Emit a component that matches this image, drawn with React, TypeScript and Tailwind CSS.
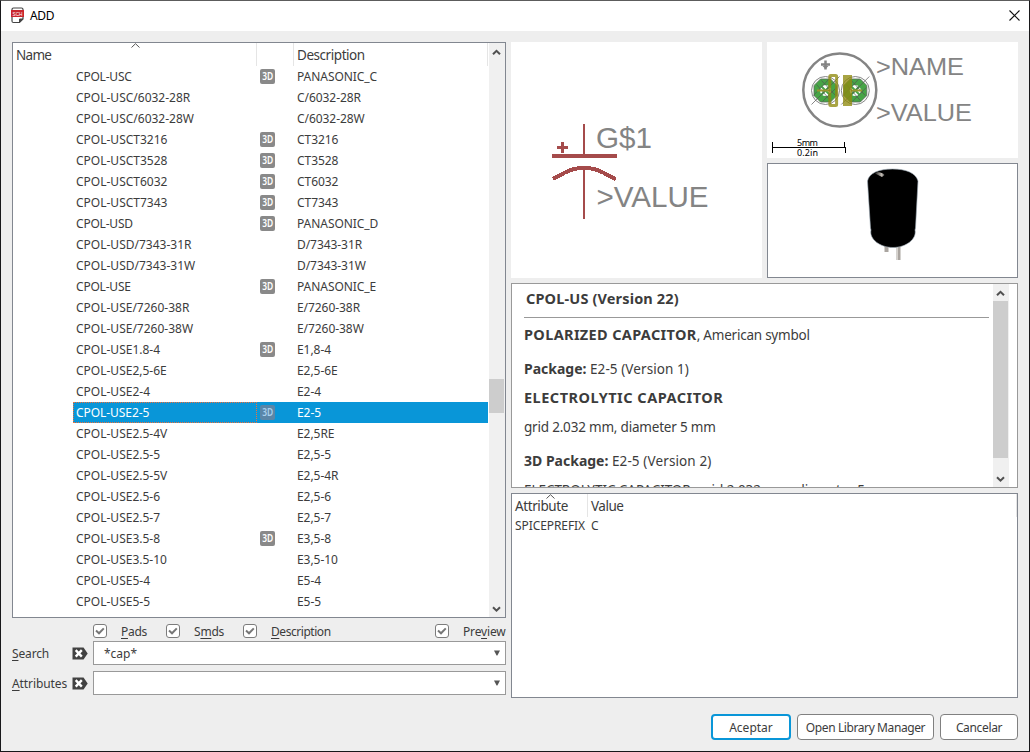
import React from "react";

const rows: [string, string, boolean][] = [
  ["CPOL-USC", "PANASONIC_C", true],
  ["CPOL-USC/6032-28R", "C/6032-28R", false],
  ["CPOL-USC/6032-28W", "C/6032-28W", false],
  ["CPOL-USCT3216", "CT3216", true],
  ["CPOL-USCT3528", "CT3528", true],
  ["CPOL-USCT6032", "CT6032", true],
  ["CPOL-USCT7343", "CT7343", true],
  ["CPOL-USD", "PANASONIC_D", true],
  ["CPOL-USD/7343-31R", "D/7343-31R", false],
  ["CPOL-USD/7343-31W", "D/7343-31W", false],
  ["CPOL-USE", "PANASONIC_E", true],
  ["CPOL-USE/7260-38R", "E/7260-38R", false],
  ["CPOL-USE/7260-38W", "E/7260-38W", false],
  ["CPOL-USE1.8-4", "E1,8-4", true],
  ["CPOL-USE2,5-6E", "E2,5-6E", false],
  ["CPOL-USE2-4", "E2-4", false],
  ["CPOL-USE2-5", "E2-5", true],
  ["CPOL-USE2.5-4V", "E2,5RE", false],
  ["CPOL-USE2.5-5", "E2,5-5", false],
  ["CPOL-USE2.5-5V", "E2,5-4R", false],
  ["CPOL-USE2.5-6", "E2,5-6", false],
  ["CPOL-USE2.5-7", "E2,5-7", false],
  ["CPOL-USE3.5-8", "E3,5-8", true],
  ["CPOL-USE3.5-10", "E3,5-10", false],
  ["CPOL-USE5-4", "E5-4", false],
  ["CPOL-USE5-5", "E5-5", false],
];
const SELECTED = "CPOL-USE2-5";

function Chevron({ down = false }: { down?: boolean }) {
  return (
    <svg width="9" height="7" viewBox="0 0 9 7" className="block">
      <path d={down ? "M1 1.2L4.5 4.7L8 1.2" : "M1 5.3L4.5 1.8L8 5.3"} fill="none" stroke="#505050" strokeWidth="2" />
    </svg>
  );
}

function SortMark() {
  return (
    <svg width="9" height="5" viewBox="0 0 9 5" className="block">
      <path d="M0.5 4.5L4.5 0.7L8.5 4.5" fill="none" stroke="#555" strokeWidth="1" />
    </svg>
  );
}

function Badge({ selected }: { selected: boolean }) {
  return (
    <svg width="15" height="15" viewBox="0 0 15 15" className="block">
      <rect width="15" height="15" rx="2" fill={selected ? "#5a86a8" : "#898989"} />
      <text
        x="2.2"
        y="11.4"
        fontSize="10.5"
        fontWeight="600"
        textLength="11"
        lengthAdjust="spacingAndGlyphs"
        fill={selected ? "#a8d0ee" : "#ffffff"}
      >
        3D
      </text>
    </svg>
  );
}

function Check({ before, letter, after }: { before: string; letter: string; after: string }) {
  return (
    <label className="flex items-center">
      <span className="flex h-[14px] w-[14px] items-center justify-center rounded-[3px] border border-[#7c7c7c] bg-white">
        <svg width="10" height="8" viewBox="0 0 10 8">
          <path d="M1 3.6L4 6.3L8.8 1.4" fill="none" stroke="#777" strokeWidth="2" />
        </svg>
      </span>
      <span className="ml-[14px] whitespace-nowrap pt-[2px] leading-[18px]">
        {before}
        <Key>{letter}</Key>
        {after}
      </span>
    </label>
  );
}

function Key({ children }: { children: React.ReactNode }) {
  return <span className="underline decoration-1 underline-offset-2">{children}</span>;
}

function ClearIcon() {
  return (
    <svg width="16" height="13" viewBox="0 0 16 13" className="block">
      <path d="M0.5 0.5H11.5L15.7 6.5L11.5 12.5H0.5Z" fill="#424242" />
      <path d="M3.7 3.2L9.8 9.6M9.8 3.2L3.7 9.6" stroke="#fff" strokeWidth="2.4" />
    </svg>
  );
}

function Combo({ value }: { value: string }) {
  return (
    <div className="flex h-6 w-[413px] items-center justify-between border border-[#999] bg-white pl-[10px] pr-[5px]">
      <span className="pt-px">{value}</span>
      <svg width="6" height="6" viewBox="0 0 6 6">
        <path d="M0 0.5H6L3.4 5.6H2.6Z" fill="#555" />
      </svg>
    </div>
  );
}

function ScrollBar({ before, thumb }: { before: string; thumb: string }) {
  return (
    <div className="flex w-4 shrink-0 flex-col items-center bg-[#f0f0f0]">
      <div className="flex h-[17px] items-center pr-px pt-px">
        <Chevron />
      </div>
      <div className={before} />
      <div className={thumb} />
      <div className="grow" />
      <div className="flex h-[17px] items-center pr-px pt-px">
        <Chevron down />
      </div>
    </div>
  );
}

function DeviceList() {
  return (
    <div className="flex h-[576px] w-[494px] border border-[#828790] bg-white">
      <div className="w-[476px]">
        <div className="flex h-[23px] text-[13.5px] leading-[24px]">
          <div className="relative w-[244px] border-r border-[#e5e5e5] pl-[3px]">
            <span className="tracking-[-0.7px]">Name</span>
            <div className="absolute left-[118px] top-0">
              <SortMark />
            </div>
          </div>
          <div className="w-[37px] border-r border-[#e5e5e5]" />
          <div className="w-[194px] border-r border-[#e5e5e5] pl-[3px] tracking-[-0.45px]">Description</div>
        </div>
        {rows.map(([name, description, has3d]) => {
          const selected = name === SELECTED;
          return (
            <div key={name} className="flex h-[21px] pl-[60px] leading-[21px]">
              <div className={selected ? "flex w-[415px] bg-[#0996d8] text-white" : "flex w-[415px]"}>
                <div
                  className={
                    selected
                      ? "w-[184px] border border-dotted border-[#f0703a] pl-[2px] leading-[19px] tracking-[-0.06px]"
                      : name.length === 8
                        ? "w-[184px] pl-[3px] tracking-[-0.2px]"
                        : "w-[184px] pl-[3px]"
                  }
                >
                  {name}
                </div>
                <div className="flex w-[37px] items-center pb-px pl-[3px]">{has3d && <Badge selected={selected} />}</div>
                <div className="pl-[3px] tracking-[-0.06px]">{description}</div>
              </div>
            </div>
          );
        })}
      </div>
      <ScrollBar before="h-[319px]" thumb="h-[34px] w-[15px] self-start bg-[#cdcdcd]" />
    </div>
  );
}

function SymbolPreview() {
  return (
    <svg width="251" height="236" className="block bg-white" shapeRendering="crispEdges">
      <g fill="none" stroke="#a54b4b" strokeLinecap="round">
        <path d="M73 82V113M73 127V177" strokeWidth="2" strokeLinecap="butt" />
        <path d="M42.500 114H104.500" strokeWidth="4" />
        <path d="M43.500 136L54 130.500Q62 126 73 126Q84 126 92 130.500L103.500 136.500" strokeWidth="4" />
        <path d="M46 105.500H57M51.500 100V111" strokeWidth="3" strokeLinecap="butt" />
      </g>
      <g fill="#848484" fontFamily="Liberation Sans, sans-serif">
        <text x="85" y="106" fontSize="29" textLength="56" lengthAdjust="spacingAndGlyphs">G$1</text>
        <text x="85.500" y="165" fontSize="29" textLength="112" lengthAdjust="spacingAndGlyphs">&gt;VALUE</text>
      </g>
    </svg>
  );
}

function Pad({ x }: { x: number }) {
  return (
    <g transform={`translate(${x} 48.500)`}>
      <path d="M-5 -11.500H5L11.500 -5V5L5 11.500H-5L-11.500 5V-5Z" fill="#46a546" stroke="#5c6b5c" strokeWidth="0.800" />
      <circle r="5.500" fill="#fff" />
      <path d="M-4.500 -4.500L4.500 4.500M4.500 -4.500L-4.500 4.500" stroke="#46a546" strokeWidth="2" />
      <circle r="14" fill="none" stroke="#777" strokeWidth="0.900" />
      <path d="M-14 14L14 -14M-9 -6L5 10M-4 -10L10 5M-12 5L3 -11M-3 11L11 -3" stroke="#555" strokeWidth="0.700" />
    </g>
  );
}

function FootprintPreview() {
  return (
    <svg width="251" height="116" className="block bg-white">
      <circle cx="72.800" cy="48" r="36.500" fill="none" stroke="#848484" strokeWidth="2.500" />
      <path d="M54 22.500H63M58.500 18.500V27.500" stroke="#848484" strokeWidth="2.500" />
      <path d="M55.500 24H61.500L58.500 27Z" fill="#848484" />
      <Pad x={58.5} />
      <Pad x={88.3} />
      <path d="M50 48.500H63M84 48.500H95" stroke="#9b972f" strokeWidth="2" />
      <rect x="62.800" y="33.500" width="6.800" height="30" rx="1" fill="none" stroke="#8f8b10" strokeOpacity="0.780" strokeWidth="3" />
      <rect x="76" y="33" width="9" height="31" fill="#8f8b10" fillOpacity="0.780" />
      <g fill="#848484" fontFamily="Liberation Sans, sans-serif" fontSize="24.500">
        <text x="109" y="33" textLength="88" lengthAdjust="spacingAndGlyphs">&gt;NAME</text>
        <text x="109" y="79" textLength="96" lengthAdjust="spacingAndGlyphs">&gt;VALUE</text>
      </g>
      <path d="M5.500 100V111M77.500 100V105M78.500 105V111M5.500 105.500H79" stroke="#000" fill="none" />
      <g fill="#000" fontSize="9">
        <text x="30" y="104" textLength="21">5mm</text>
        <text x="30" y="114" textLength="21">0.2in</text>
      </g>
    </svg>
  );
}

function ModelPreview() {
  return (
    <div className="h-[115px] w-[251px] border border-[#828790] bg-white">
      <svg width="249" height="113" className="block">
        <defs>
          <linearGradient id="glint" x1="0" x2="1">
            <stop offset="0" stopColor="#222" />
            <stop offset="0.700" stopColor="#c4bdb5" />
            <stop offset="1" stopColor="#555" />
          </linearGradient>
        </defs>
        <path d="M116.500 82H120.500V88H116.500ZM128.500 82H132.500V96H128.500Z" fill="#aaa5a0" />
        <path d="M129.500 82V96" stroke="#d7d3ce" />
        <path
          d="M99.500 17C101 9 111 5 124.500 5S148 9 150 17L147.500 64L147 66C149 75 138 83.500 125 83.500S101 75 103 66L102.500 64Z"
          fill="#000" stroke="#9aa8b3" strokeWidth="0.600"
        />
        <path d="M107 9.500C109 7.500 114 8 116.500 11L114 13Z" fill="url(#glint)" />
      </svg>
    </div>
  );
}

function Details() {
  return (
    <div className="flex h-[205px] w-[507px] border border-[#999] bg-white">
      <div className="h-[203px] w-[481px] overflow-hidden pl-3 text-[13.500px]">
        <div className="mr-1 h-[34px] border-b border-[#999] pl-[2px] text-[14.500px] leading-[28px]">
          <b className="tracking-[0.150px]">CPOL-US (Version 22)</b>
        </div>
        <p className="h-[34px] leading-[32px]">
          <b className="text-[14.500px] tracking-[0.350px]">POLARIZED CAPACITOR</b>
          <span className="tracking-[-0.230px]">, American symbol</span>
        </p>
        <p className="h-[34px] leading-[34px]">
          <b className="text-[14px]">Package:</b> <span className="tracking-[0.080px]">E2-5 (Version 1)</span>
        </p>
        <p className="h-[24px] leading-[22px]">
          <b className="text-[14.500px] tracking-[0.500px]">ELECTROLYTIC CAPACITOR</b>
        </p>
        <p className="h-[34px] leading-[34px] tracking-[-0.200px]">grid 2.032 mm, diameter 5 mm</p>
        <p className="h-[34px] leading-[34px]">
          <b className="text-[14px]">3D Package:</b> <span className="tracking-[0.120px]">E2-5 (Version 2)</span>
        </p>
        <p className="h-[24px] whitespace-nowrap leading-[24px] tracking-[-0.050px]">
          ELECTROLYTIC CAPACITOR, grid 2.032 mm, diameter 5
        </p>
      </div>
      <ScrollBar before="h-0" thumb="h-[157px] w-[15px] self-start bg-[#cdcdcd]" />
    </div>
  );
}

function AttributeTable() {
  return (
    <div className="h-[205px] w-[507px] border border-[#828790] bg-white">
      <div className="flex h-[23px] text-[13.500px] leading-[24px]">
        <div className="relative w-[76px] border-r border-[#e5e5e5] pl-[3px] tracking-[-0.400px]">
          Attribute
          <div className="absolute left-[34px] top-0">
            <SortMark />
          </div>
        </div>
        <div className="grow border-r border-[#e5e5e5] pl-[3px] tracking-[-0.500px]">Value</div>
      </div>
      <div className="flex h-[17px] leading-[17px]">
        <div className="w-[76px] pl-[3px] tracking-[-0.080px]">SPICEPREFIX</div>
        <div className="pl-[3px]">C</div>
      </div>
    </div>
  );
}

export default function App() {
  return (
    <div className="flex h-[752px] w-[1030px] flex-col overflow-hidden border border-[#18181a] border-t-[#5c5c5c] bg-[#eeeeee] font-['Noto_Sans',sans-serif] text-[12px] text-[#3c3c3c]">
      <header className="flex h-[30px] items-center bg-white pl-[10px] pr-[9px] text-black">
        <svg width="13" height="17" viewBox="0 0 13 17" className="mb-px">
          <path d="M2.500 1H10.500Q12 1 12 2.500V12L8.500 15.500H2.500Q1 15.500 1 14V2.500Q1 1 2.500 1Z" fill="#fff" stroke="#444" strokeWidth="1.200" />
          <path d="M8.500 15.500V12H12Z" fill="#444" stroke="#444" />
          <rect x="0" y="3" width="13" height="7" fill="#c9252d" />
          <text x="1.500" y="8.800" fontSize="6" textLength="10" lengthAdjust="spacingAndGlyphs" fill="#fff" fontFamily="Liberation Sans, sans-serif">SCH</text>
        </svg>
        <h1 className="ml-[6px] grow text-[12px] tracking-[-0.400px]">ADD</h1>
        <svg width="11" height="11" viewBox="0 0 11 11" className="mb-[2px]">
          <path d="M0.500 0.500L10.500 10.500M10.500 0.500L0.500 10.500" stroke="#111" strokeWidth="1.100" />
        </svg>
      </header>
      <div className="flex gap-[5px] pl-[11px] pt-[11px]">
        <section className="w-[494px]">
          <DeviceList />
          <div className="flex h-[23px] items-center pl-[81px] pt-[2px]">
            <div className="w-[73px] tracking-[-0.300px]"><Check before="" letter="P" after="ads" /></div>
            <div className="w-[77px] tracking-[-0.200px]"><Check before="S" letter="m" after="ds" /></div>
            <div className="w-[192px] tracking-[-0.450px]"><Check before="" letter="D" after="escription" /></div>
            <div className="tracking-[-0.150px]"><Check before="Pre" letter="v" after="iew" /></div>
          </div>
          <div className="flex items-center">
            <span className="w-[60px] pt-px tracking-[-0.150px]"><Key>S</Key>earch</span>
            <span className="w-[21px]"><ClearIcon /></span>
            <Combo value="*cap*" />
          </div>
          <div className="mt-[6px] flex items-center">
            <span className="w-[60px] whitespace-nowrap pt-px tracking-[-0.100px]"><Key>A</Key>ttributes</span>
            <span className="w-[21px]"><ClearIcon /></span>
            <Combo value="" />
          </div>
        </section>
        <section className="flex w-[507px] flex-col gap-[5px]">
          <div className="flex gap-[5px]">
            <SymbolPreview />
            <div className="flex flex-col gap-[5px]">
              <FootprintPreview />
              <ModelPreview />
            </div>
          </div>
          <Details />
          <AttributeTable />
          <div className="mt-[11px] flex justify-end gap-[6px]">
            <button className="h-[26px] w-[80px] rounded-[4px] border-2 border-[#0996d8] bg-white pt-[2px]">Aceptar</button>
            <button className="h-[26px] w-[137px] whitespace-nowrap rounded-[4px] border border-[#808080] bg-white pt-[2px] tracking-[-0.400px]">Open Library Manager</button>
            <button className="h-[26px] w-[78px] rounded-[4px] border border-[#808080] bg-white pt-[2px] tracking-[-0.350px]">Cancelar</button>
          </div>
        </section>
      </div>
    </div>
  );
}
